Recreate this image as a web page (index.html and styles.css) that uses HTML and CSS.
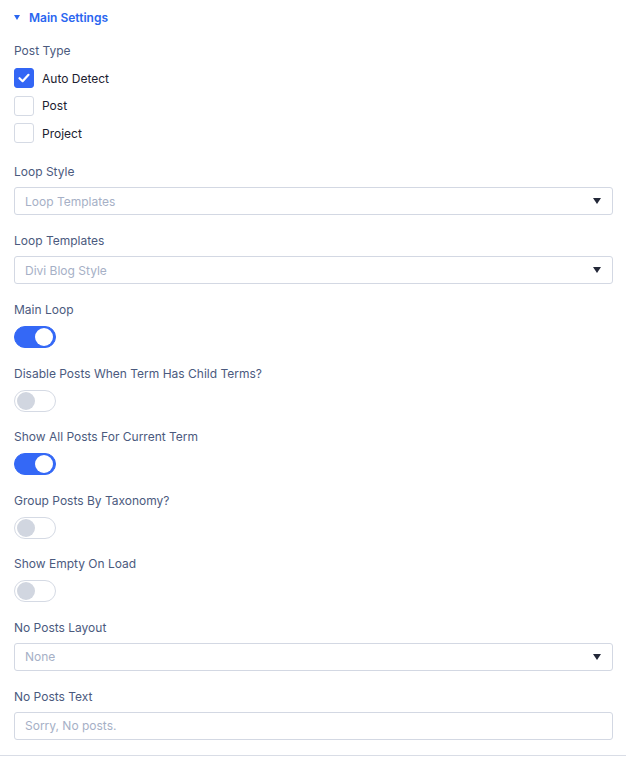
FILE: index.html
```html
<!DOCTYPE html>
<html lang="en">
<head>
  <meta charset="UTF-8">
  <meta name="viewport" content="width=device-width, initial-scale=1.0">
  <title>Main Settings</title>
  <link rel="stylesheet" href="styles.css">
</head>
<body>
  <div class="settings-panel">
    <div class="panel-header">
      <span class="caret"></span>
      <span class="panel-title">Main Settings</span>
    </div>

    <div class="field field-checks">
      <label class="field-label">Post Type</label>
      <div class="check-list">
        <label class="check-row">
          <span class="check-box checked">
            <svg width="14" height="14" viewBox="0 0 14 14"><path d="M2.5 7.2 L5.6 10.2 L11.5 3.8" fill="none" stroke="#fff" stroke-width="2.2" stroke-linecap="round" stroke-linejoin="round"/></svg>
          </span>
          Auto Detect
        </label>
        <label class="check-row"><span class="check-box"></span>Post</label>
        <label class="check-row"><span class="check-box"></span>Project</label>
      </div>
    </div>

    <div class="field">
      <label class="field-label">Loop Style</label>
      <div class="select-box"><span>Loop Templates</span><span class="select-arrow"></span></div>
    </div>

    <div class="field">
      <label class="field-label">Loop Templates</label>
      <div class="select-box"><span>Divi Blog Style</span><span class="select-arrow"></span></div>
    </div>

    <div class="field field-toggle">
      <label class="field-label">Main Loop</label>
      <span class="toggle on"><span class="knob"></span></span>
    </div>

    <div class="field field-toggle">
      <label class="field-label">Disable Posts When Term Has Child Terms?</label>
      <span class="toggle"><span class="knob"></span></span>
    </div>

    <div class="field field-toggle">
      <label class="field-label">Show All Posts For Current Term</label>
      <span class="toggle on"><span class="knob"></span></span>
    </div>

    <div class="field field-toggle">
      <label class="field-label">Group Posts By Taxonomy?</label>
      <span class="toggle"><span class="knob"></span></span>
    </div>

    <div class="field field-toggle">
      <label class="field-label">Show Empty On Load</label>
      <span class="toggle"><span class="knob"></span></span>
    </div>

    <div class="field">
      <label class="field-label">No Posts Layout</label>
      <div class="select-box"><span>None</span><span class="select-arrow"></span></div>
    </div>

    <div class="field field-last">
      <label class="field-label">No Posts Text</label>
      <input class="text-input" type="text" placeholder="Sorry, No posts.">
    </div>
  </div>
</body>
</html>
```

FILE: styles.css
```css
body {
  margin: 0;
  background: #fff;
  font-family: Inter, "Noto Sans", sans-serif;
  font-size: 12px;
}

.settings-panel {
  padding: 9px 13px 15px 14px;
  border-bottom: 1px solid #d9dde6;
  display: flex;
  flex-direction: column;
}

.panel-header {
  display: flex;
  align-items: center;
  gap: 9px;
  height: 16px;
  margin-bottom: 18px;
}

.caret {
  width: 0;
  height: 0;
  border-left: 3.5px solid transparent;
  border-right: 3.5px solid transparent;
  border-top: 5px solid #2a66f0;
}

.panel-title {
  color: #2a66f0;
  font-weight: 600;
  font-size: 12px;
}

.field {
  display: flex;
  flex-direction: column;
  margin-bottom: 18px;
}

.field-last {
  margin-bottom: 0;
}

.field-label {
  color: #4b5a7e;
  font-size: 12px;
  line-height: 16px;
  margin-bottom: 7px;
}

.field-toggle {
  margin-bottom: 17.5px;
}

.field-toggle .field-label {
  margin-bottom: 8px;
}

.field-checks {
  margin-bottom: 21px;
}

.field-checks .field-label {
  margin-bottom: 9px;
}

.check-list {
  display: flex;
  flex-direction: column;
  gap: 7.5px;
}

.check-row {
  display: flex;
  align-items: center;
  gap: 8px;
  color: #1c2130;
  font-size: 12px;
  height: 20px;
}

.check-box {
  width: 18px;
  height: 18px;
  border: 1px solid #d5dae4;
  border-radius: 3px;
  background: #fff;
  display: flex;
  align-items: center;
  justify-content: center;
}

.check-box.checked {
  background: #3366f5;
  border-color: #3366f5;
}

.select-box,
.text-input {
  box-sizing: border-box;
  height: 28px;
  width: 100%;
  border: 1px solid #d3d8e3;
  border-radius: 3px;
  padding: 0 10px;
  display: flex;
  align-items: center;
  justify-content: space-between;
  color: #a6b0c6;
  font-size: 12px;
  background: #fff;
}

.text-input {
  font-family: inherit;
  outline: none;
}

.text-input::placeholder {
  color: #a6b0c6;
}

.select-arrow {
  width: 0;
  height: 0;
  border-left: 4.5px solid transparent;
  border-right: 4.5px solid transparent;
  border-top: 6px solid #232838;
  margin-right: 1px;
}

.toggle {
  box-sizing: border-box;
  width: 42px;
  height: 22px;
  border-radius: 11px;
  border: 1px solid #d5dae4;
  background: #fff;
  display: flex;
  align-items: center;
  padding: 0 2px;
}

.toggle .knob {
  width: 18px;
  height: 18px;
  border-radius: 50%;
  background: #d1d6e0;
}

.toggle.on {
  background: #3468f6;
  border-color: #3468f6;
  justify-content: flex-end;
}

.toggle.on .knob {
  background: #fff;
}
```
